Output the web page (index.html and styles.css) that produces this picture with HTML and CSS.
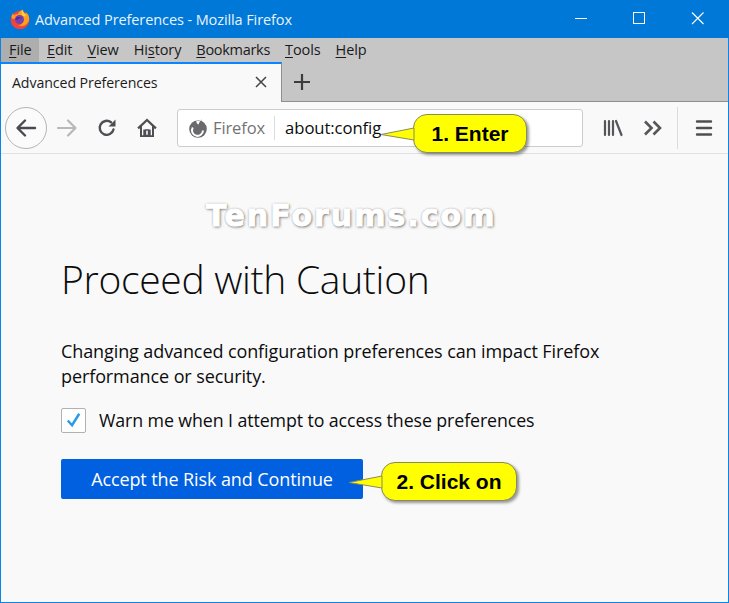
FILE: index.html
```html
<!DOCTYPE html>
<html lang="en">
<head>
<meta charset="utf-8">
<title>Advanced Preferences - Mozilla Firefox</title>
<link rel="stylesheet" href="styles.css">
</head>
<body>
<div class="window">
  <header class="titlebar">
    <svg class="logo" viewBox="0 0 20 20" width="20" height="20">
      <circle cx="10" cy="11" r="9.300" fill="#f2433d"/>
      <path d="M1.500 8c.5 2 2 2.500 3.500 1.500 2-1 5-1 7.500 1 1 3-1 5.500-4 6 4 2 9-.5 10.500-5 .8-4-1-7-3.500-8.500 1 2.500-.5 3-1.500 2C13 4 12 2.500 13 .5 10 1.500 8 3.500 8 5.500 6.500 5 5 5.500 4.500 6.500 4 6.300 3 5 3 4.500 2.300 5.500 1.700 6.500 1.500 8z" fill="#ff9f1c"/>
      <path d="M13 .8c-2 2-2 4.500 0 6.200 2 1 3 0 2.500-2C14 4 13 3 13 .8z" fill="#ffd43a"/>
      <circle cx="9.500" cy="10.500" r="4.500" fill="#7a3fb0"/>
      <path d="M5.500 9c2-1.500 5-1.500 7 .5-2-.5-4 0-5 1.500-1 0-2-.5-2-2z" fill="#4a2fa0"/>
    </svg>
    <span class="title">Advanced Preferences - Mozilla Firefox</span>
    <div class="wincontrols">
      <svg viewBox="0 0 46 20" width="46" height="20"><path d="M12 9.500h12" stroke="#fff" stroke-width="1"/></svg>
      <svg viewBox="0 0 46 20" width="46" height="20"><rect x="12.500" y="3.500" width="11" height="11" fill="none" stroke="#fff"/></svg>
      <svg viewBox="0 0 46 20" width="46" height="20"><path d="M13 3.500l11.500 11.500M24.500 3.500L13 15" stroke="#fff" stroke-width="1.100" fill="none"/></svg>
    </div>
  </header>

  <nav class="menubar">
    <span class="menu menu-active"><u>F</u>ile</span>
    <span class="menu"><u>E</u>dit</span>
    <span class="menu"><u>V</u>iew</span>
    <span class="menu">Hi<u>s</u>tory</span>
    <span class="menu menu-wide"><u>B</u>ookmarks</span>
    <span class="menu"><u>T</u>ools</span>
    <span class="menu"><u>H</u>elp</span>
  </nav>

  <div class="tabstrip">
    <div class="tab">
      <span class="tab-label">Advanced Preferences</span>
      <svg class="tab-close" viewBox="0 0 12 12" width="12" height="12"><path d="M1 1l10 10M11 1L1 11" stroke="#444" stroke-width="1.500" fill="none"/></svg>
    </div>
    <svg class="newtab" viewBox="0 0 18 18" width="18" height="18"><path d="M9 1v16M1 9h16" stroke="#3c3c3c" stroke-width="2.200" fill="none"/></svg>
  </div>

  <div class="navbar">
    <div class="backbtn">
      <svg viewBox="0 0 22 20" width="22" height="20"><path d="M10 2.500L2.500 10l7.500 7.500M3 10h17" stroke="#4a4a4f" stroke-width="2.400" fill="none" stroke-linecap="round" stroke-linejoin="round"/></svg>
    </div>
    <svg class="fwd" viewBox="0 0 22 20" width="22" height="20"><path d="M12 2.500L19.500 10 12 17.500M19 10H2" stroke="#b8b8ba" stroke-width="2.200" fill="none" stroke-linecap="round" stroke-linejoin="round"/></svg>
    <svg class="reload" viewBox="0 0 20 20" width="20" height="20"><path d="M16.500 11.500A7 7 0 1 1 14 4.300" stroke="#4f4f53" stroke-width="2.400" fill="none" stroke-linecap="round"/><path d="M18.500 1.500v7h-7z" fill="#4f4f53"/></svg>
    <svg class="home" viewBox="0 0 20 20" width="20" height="20"><path d="M10 .5L.3 9.500l1.500 1.700L3 10.200v8.800h5v-5.500h4V19h5v-8.800l1.200 1 1.500-1.700z" fill="#4f4f53"/><path d="M10 3.600L5 8.300v8.900h1.300v-5.700h7.400v5.700H15V8.300z" fill="#f9f9fa"/><rect x="8" y="11.500" width="4" height="7.500" fill="#4f4f53"/><rect x="9.200" y="12.700" width="1.600" height="4" fill="#f9f9fa"/></svg>
    <div class="urlbar">
      <svg class="urlicon" viewBox="0 0 20 20" width="20" height="20"><circle cx="10" cy="11" r="8.800" fill="#6a6a6e"/><path d="M13.500.8c.5 3-1 5-3.500 6.200 2.500.5 5 .5 5.500 3" fill="#6a6a6e"/><path d="M4.800 9.500A5.500 5.500 0 1 0 15 12.500" stroke="#fff" stroke-width="2" fill="none"/><path d="M8.500 2.500C8 4.500 9 6 10.500 6.500L12 3z" fill="#fff"/></svg>
      <span class="identity">Firefox</span>
      <span class="urlsep"></span>
      <span class="url">about:config</span>
    </div>
    <div class="toolicons">
      <svg viewBox="0 0 20 20" width="20" height="20"><path d="M2 3v14M6 3v14M10 3v14M13 3l5.500 14" stroke="#55555a" stroke-width="2.200" fill="none" stroke-linecap="round"/></svg>
      <svg viewBox="0 0 20 20" width="20" height="20"><path d="M2 3.500L8.500 10 2 16.500M10.500 3.500L17 10l-6.500 6.500" stroke="#55555a" stroke-width="2.600" fill="none"/></svg>
      <span class="toolsep"></span>
      <svg viewBox="0 0 20 20" width="20" height="20"><path d="M3 3.500h14M3 10h14M3 16.500h14" stroke="#4f4f53" stroke-width="2.400" fill="none" stroke-linecap="round"/></svg>
    </div>
  </div>

  <main class="content">
    <div class="watermark">TenForums.com</div>
    <h1 class="heading">Proceed with Caution</h1>
    <p class="desc">Changing advanced configuration preferences can impact Firefox<br>performance or security.</p>
    <label class="warn">
      <span class="checkbox">
        <svg viewBox="0 0 24 24" width="24" height="24"><path d="M6 12.500l4.500 5L18 5.500" stroke="#2b9be8" stroke-width="2.600" fill="none"/></svg>
      </span>
      <span>Warn me when I attempt to access these preferences</span>
    </label>
    <button class="accept">Accept the Risk and Continue</button>
  </main>

  <div class="callout callout-enter">
    <svg class="tail" viewBox="0 0 34 14" width="34" height="14"><path d="M0 7.500L33 1v12z" fill="#ffff00" stroke="#8a8a60"/></svg>
    <span class="bubble">1. Enter</span>
  </div>
  <div class="callout callout-click">
    <svg class="tail" viewBox="0 0 34 14" width="34" height="14"><path d="M0 7.500L33 1v12z" fill="#ffff00" stroke="#8a8a60"/></svg>
    <span class="bubble">2. Click on</span>
  </div>
</div>
</body>
</html>
```
FILE: styles.css
```css
* { box-sizing: border-box; }
html, body { margin: 0; padding: 0; }
body { width: 729px; height: 603px; overflow: hidden; font-family: "Open Sans", "Noto Sans", sans-serif; }

.window { position: relative; width: 729px; height: 603px; display: flex; flex-direction: column; border: 1px solid #0a84e6; border-top: 0; background: #f9f9fa; }

.titlebar { height: 38px; flex: none; margin: 0 -1px; padding: 0 0 0 10px; background: #0078d7; color: #fff; display: flex; align-items: center; }
.logo { flex: none; margin-right: 5px; }
.title { font-size: 14.500px; letter-spacing: -.1px; color: #e8f3fc; }
.wincontrols { margin-left: auto; display: flex; gap: 12px; padding-right: 4px; }

.menubar { height: 24px; flex: none; background: #c6c6c6; display: flex; font-size: 14.500px; letter-spacing: -.1px; color: #1a1a1a; }
.menu { padding: 0 7px 0 8px; line-height: 24px; }
.menu:first-child { width: 38px; }
.menu-wide { letter-spacing: -.3px; }
.menu-active { background: #aeaeae; }
.menubar u { text-underline-offset: 2px; text-decoration-thickness: 1px; }

.tabstrip { height: 40px; flex: none; background: #c6c6c6; border-bottom: 1px solid #8e8e8e; display: flex; align-items: center; }
.tab { width: 281px; height: 40px; margin-bottom: -1px; background: #f9f9fa; border-top: 2px solid #0a84ff; border-right: 1px solid #8e8e8e; display: flex; align-items: center; padding: 0 14px 2px 11px; }
.tab-label { font-size: 14.200px; letter-spacing: -.1px; color: #1c1c1c; }
.tab-close { margin-left: auto; }
.newtab { margin-left: 11px; }

.navbar { height: 52px; flex: none; display: flex; align-items: center; border-bottom: 1px solid #e0e0e2; padding: 0 0 0 4px; }
.backbtn { width: 42px; height: 42px; border: 1px solid #b5b5b7; border-radius: 50%; background: #fbfbfb; display: flex; align-items: center; justify-content: center; flex: none; }
.fwd { margin-left: 9px; flex: none; }
.reload { margin-left: 19px; flex: none; }
.home { margin-left: 20px; flex: none; }
.urlbar { margin-left: 20px; width: 406px; height: 38px; background: #fff; border: 1px solid #ccc; border-radius: 3px; display: flex; align-items: center; padding-left: 10px; flex: none; }
.urlicon { flex: none; }
.identity { margin-left: 5px; font-size: 16.500px; color: #737373; letter-spacing: -.1px; }
.urlsep { width: 1px; height: 24px; background: #dcdcdc; margin: 0 10px 0 9px; }
.url { font-size: 16.700px; color: #0c0c0d; letter-spacing: -.1px; }
.toolicons { display: flex; align-items: center; margin-left: 20px; gap: 20px; }
.toolsep { width: 1px; height: 42px; background: #dcdcde; margin: 0 -4px 0 -6px; }

.content { flex: 1; padding: 0 0 0 60px; position: relative; }
.watermark { position: absolute; left: 205px; top: 43px; font-family: "DejaVu Sans", sans-serif; font-weight: 700; font-size: 30px; letter-spacing: 2px; line-height: 38px; color: #fff; -webkit-text-stroke: 1px #fff; text-shadow: 1px 1px 3px #666, 0 0 2px #888; }
.heading { margin: 100px 0 0; font-weight: 300; font-size: 39px; line-height: 50px; color: #0c0c0d; letter-spacing: -.3px; }
.desc { margin: 35px 0 0; font-size: 18px; line-height: 25px; color: #0c0c0d; letter-spacing: -.1px; }
.warn { display: flex; align-items: center; margin-top: 18px; font-size: 17.800px; letter-spacing: -.1px; color: #0c0c0d; line-height: 26px; }
.checkbox { width: 25px; height: 25px; border: 1px solid #b1b1b3; border-radius: 2px; background: #fff; display: flex; align-items: center; justify-content: center; margin-right: 13px; flex: none; }
.accept { display: block; margin-top: 26px; width: 302px; height: 40px; border: 0; border-radius: 2px; background: #0060df; color: #fff; font-family: inherit; font-size: 18px; letter-spacing: -.1px; padding: 0; }

.callout { position: absolute; display: flex; align-items: center; }
.tail { flex: none; margin-right: -2px; position: relative; z-index: 1; }
.bubble { display: block; background: #ffff00; border: 1px solid #8a8a60; border-radius: 14px; height: 39px; line-height: 37px; font-family: "Liberation Sans", sans-serif; font-weight: 700; font-size: 21px; color: #000; text-align: center; box-shadow: 2px 2px 3px rgba(0,0,0,.4); }
.callout-enter { left: 380px; top: 114px; }
.callout-enter .bubble { width: 114px; }
.callout-click { left: 348px; top: 462px; }
.callout-click .bubble { width: 136px; }
```
